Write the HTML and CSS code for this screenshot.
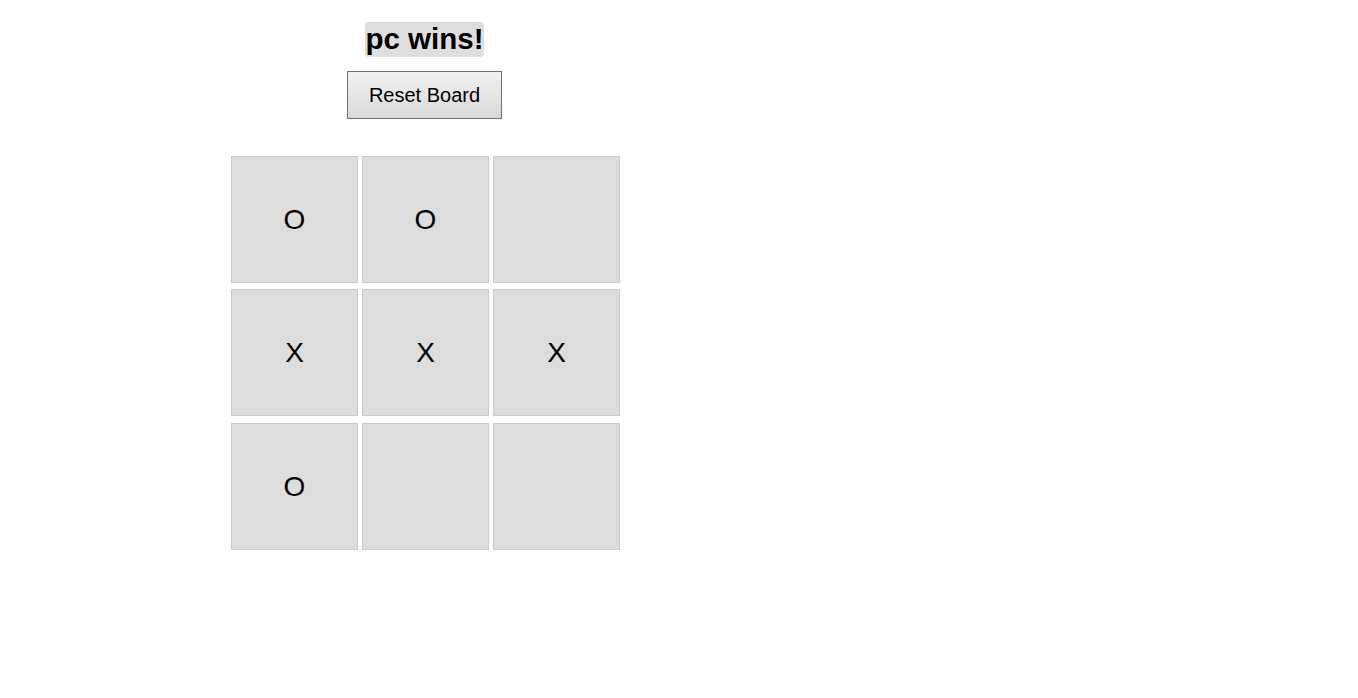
FILE: index.html
```html
<!DOCTYPE html>
<html>
<head>
<meta charset="utf-8">
<link rel="stylesheet" href="styles.css">
</head>
<body>
<div class="game">
  <div class="status"><span class="status-text">pc wins!</span></div>
  <div class="controls"><button class="reset">Reset Board</button></div>
  <div class="board">
    <div class="row">
      <div class="cell">O</div>
      <div class="cell">O</div>
      <div class="cell"></div>
    </div>
    <div class="row">
      <div class="cell">X</div>
      <div class="cell">X</div>
      <div class="cell">X</div>
    </div>
    <div class="row">
      <div class="cell">O</div>
      <div class="cell"></div>
      <div class="cell"></div>
    </div>
  </div>
</div>
</body>
</html>
```
FILE: styles.css
```css
html, body {
  margin: 0;
  padding: 0;
  background: #fff;
}
body {
  padding: 8px;
  font-family: "Liberation Sans", Arial, sans-serif;
  color: #000;
}
.game {
  margin-left: 223px;
  width: 387px;
  display: flex;
  flex-direction: column;
  align-items: center;
}
.status {
  margin-top: 14px;
  font-size: 29.5px;
  font-weight: bold;
  line-height: 34px;
  height: 35px;
}
.status-text {
  background: #dedede;
  border-radius: 4px;
  display: inline-block;
  height: 35px;
}
.controls {
  margin-top: 14px;
}
.reset {
  width: 155px;
  height: 48px;
  font-family: "Liberation Sans", Arial, sans-serif;
  font-size: 20px;
  color: #000;
  border: 1px solid #707070;
  border-radius: 0;
  background: linear-gradient(#f1f1f1, #dadada);
  padding: 0;
  margin: 0;
}
.board {
  align-self: flex-start;
  margin-top: 37px;
  display: flex;
  flex-direction: column;
  width: 389px;
}
.row {
  display: flex;
  gap: 4px;
}
.row + .row {
  margin-top: 6px;
}
.row + .row + .row {
  margin-top: 7px;
}
.cell {
  width: 125px;
  height: 125px;
  border: 1px solid #cacaca;
  background: #dddddd;
  display: flex;
  align-items: center;
  justify-content: center;
  font-size: 28px;
}
```
